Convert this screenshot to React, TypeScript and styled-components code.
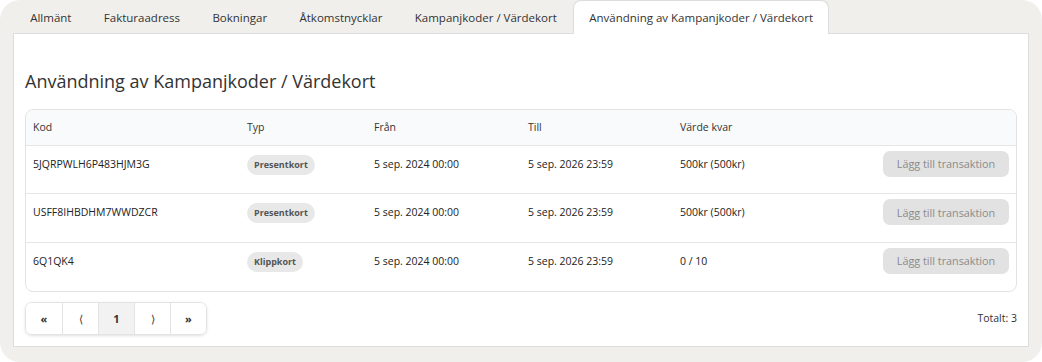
import React from 'react';
import styled, { createGlobalStyle } from 'styled-components';

interface Usage {
  code: string;
  type: string;
  from: string;
  to: string;
  left: string;
}

const rows: Usage[] = [
  { code: '5JQRPWLH6P483HJM3G', type: 'Presentkort', from: '5 sep. 2024 00:00', to: '5 sep. 2026 23:59', left: '500kr (500kr)' },
  { code: 'USFF8IHBDHM7WWDZCR', type: 'Presentkort', from: '5 sep. 2024 00:00', to: '5 sep. 2026 23:59', left: '500kr (500kr)' },
  { code: '6Q1QK4', type: 'Klippkort', from: '5 sep. 2024 00:00', to: '5 sep. 2026 23:59', left: '0 / 10' },
];

const tabs = ['Allmänt', 'Fakturaadress', 'Bokningar', 'Åtkomstnycklar', 'Kampanjkoder / Värdekort', 'Användning av Kampanjkoder / Värdekort'];

const GlobalStyle = createGlobalStyle`
  html, body {
    margin: 0;
    padding: 0;
    background: #ffffff;
  }
  body {
    font-family: 'Open Sans', 'Noto Sans', sans-serif;
    color: #333;
  }
  * { box-sizing: border-box; }
`;

const App: React.FC = () => {
  return (
    <>
      <GlobalStyle />
      <Frame>
        <TabBar>
          {tabs.map((t, i) => (
            <Tab key={t} $active={i === tabs.length - 1}>
              {t}
            </Tab>
          ))}
        </TabBar>
        <Panel>
          <Heading>Användning av Kampanjkoder / Värdekort</Heading>
          <TableBox>
            <Table>
              <thead>
                <tr>
                  <Th $w={214}>Kod</Th>
                  <Th $w={127}>Typ</Th>
                  <Th $w={154}>Från</Th>
                  <Th $w={152}>Till</Th>
                  <Th>Värde kvar</Th>
                  <Th />
                </tr>
              </thead>
              <tbody>
                {rows.map((r) => (
                  <tr key={r.code}>
                    <Td>{r.code}</Td>
                    <Td>
                      <Badge>{r.type}</Badge>
                    </Td>
                    <Td>{r.from}</Td>
                    <Td>{r.to}</Td>
                    <Td>{r.left}</Td>
                    <Td $right>
                      <ActionBtn disabled>Lägg till transaktion</ActionBtn>
                    </Td>
                  </tr>
                ))}
              </tbody>
            </Table>
          </TableBox>
          <Footer>
            <Pager>
              <PageBtn>«</PageBtn>
              <PageBtn $thin>⟨</PageBtn>
              <PageBtn $active>1</PageBtn>
              <PageBtn $thin>⟩</PageBtn>
              <PageBtn>»</PageBtn>
            </Pager>
            <Total>Totalt: 3</Total>
          </Footer>
        </Panel>
      </Frame>
    </>
  );
};

export default App;

const Frame = styled.div`
  width: 1042px;
  height: 362px;
  background: #f0efec;
  border-radius: 20px;
  padding: 0 13px 15px 13px;
  display: flex;
  flex-direction: column;
`;

const TabBar = styled.div`
  display: flex;
  align-items: flex-end;
  height: 33px;
  padding-left: 1px;
`;

interface TabProps {
  $active?: boolean;
}

const Tab = styled.div<TabProps>`
  height: ${(p) => (p.$active ? '34px' : '33px')};
  margin-bottom: ${(p) => (p.$active ? '-1px' : '0')};
  padding: 0 15.2px;
  display: flex;
  align-items: center;
  font-size: 11.5px;
  color: #333;
  background: ${(p) => (p.$active ? '#ffffff' : 'transparent')};
  border: 1px solid ${(p) => (p.$active ? '#dddddd' : 'transparent')};
  border-bottom: none;
  border-radius: 8px 8px 0 0;
  position: relative;
  z-index: 1;
  white-space: nowrap;
`;

const Panel = styled.div`
  flex: 1;
  background: #ffffff;
  border: 1px solid #dddddd;
  padding: 0 11px;
  display: flex;
  flex-direction: column;
`;

const Heading = styled.h2`
  margin: 34px 0 15px 0;
  font-size: 18px;
  font-weight: 400;
  color: #333;
  line-height: 26px;
`;

const TableBox = styled.div`
  border: 1px solid #e3e3e3;
  border-radius: 8px;
  overflow: hidden;
`;

const Table = styled.table`
  width: 100%;
  border-collapse: collapse;
  font-size: 10.5px;
`;

interface ThProps {
  $w?: number;
}

const Th = styled.th<ThProps>`
  width: ${(p) => (p.$w ? `${p.$w}px` : 'auto')};
  background: #f9fafb;
  text-align: left;
  font-weight: 400;
  color: #333;
  height: 35px;
  padding: 0 0 0 7px;
  border-bottom: 1px solid #e6e6e6;
`;

interface TdProps {
  $right?: boolean;
}

const Td = styled.td<TdProps>`
  height: 48.5px;
  padding: ${(p) => (p.$right ? '5px 7px 0 0' : '11px 0 0 7px')};
  text-align: ${(p) => (p.$right ? 'right' : 'left')};
  color: #222;
  vertical-align: top;
  tr:not(:last-child) > & {
    border-bottom: 1px solid #e6e6e6;
  }
`;

const Badge = styled.span`
  display: inline-block;
  margin-top: -2px;
  padding: 3px 7px;
  background: #e8e8e8;
  border-radius: 10px;
  font-size: 9px;
  font-weight: 700;
  color: #555;
  line-height: 14px;
`;

const ActionBtn = styled.button`
  font-family: inherit;
  font-size: 10.8px;
  color: #8a8a8a;
  background: #e2e2e2;
  border: none;
  border-radius: 7px;
  height: 26px;
  width: 126px;
  padding: 0;
`;

const Footer = styled.div`
  display: flex;
  justify-content: space-between;
  align-items: center;
  margin-top: 10px;
`;

const Pager = styled.div`
  display: flex;
  border: 1px solid #e3e3e3;
  border-radius: 7px;
  box-shadow: 0 1px 3px rgba(0, 0, 0, 0.12);
  overflow: hidden;
`;

interface PageBtnProps {
  $active?: boolean;
  $thin?: boolean;
}

const PageBtn = styled.div<PageBtnProps>`
  width: 36px;
  height: 31px;
  display: flex;
  align-items: center;
  justify-content: center;
  font-size: 11px;
  font-weight: ${(p) => (p.$thin ? 400 : 700)};
  color: #333;
  background: ${(p) => (p.$active ? '#f2f2f2' : '#ffffff')};
  & + & {
    border-left: 1px solid #e3e3e3;
  }
`;

const Total = styled.span`
  font-size: 10.5px;
  color: #333;
`;
